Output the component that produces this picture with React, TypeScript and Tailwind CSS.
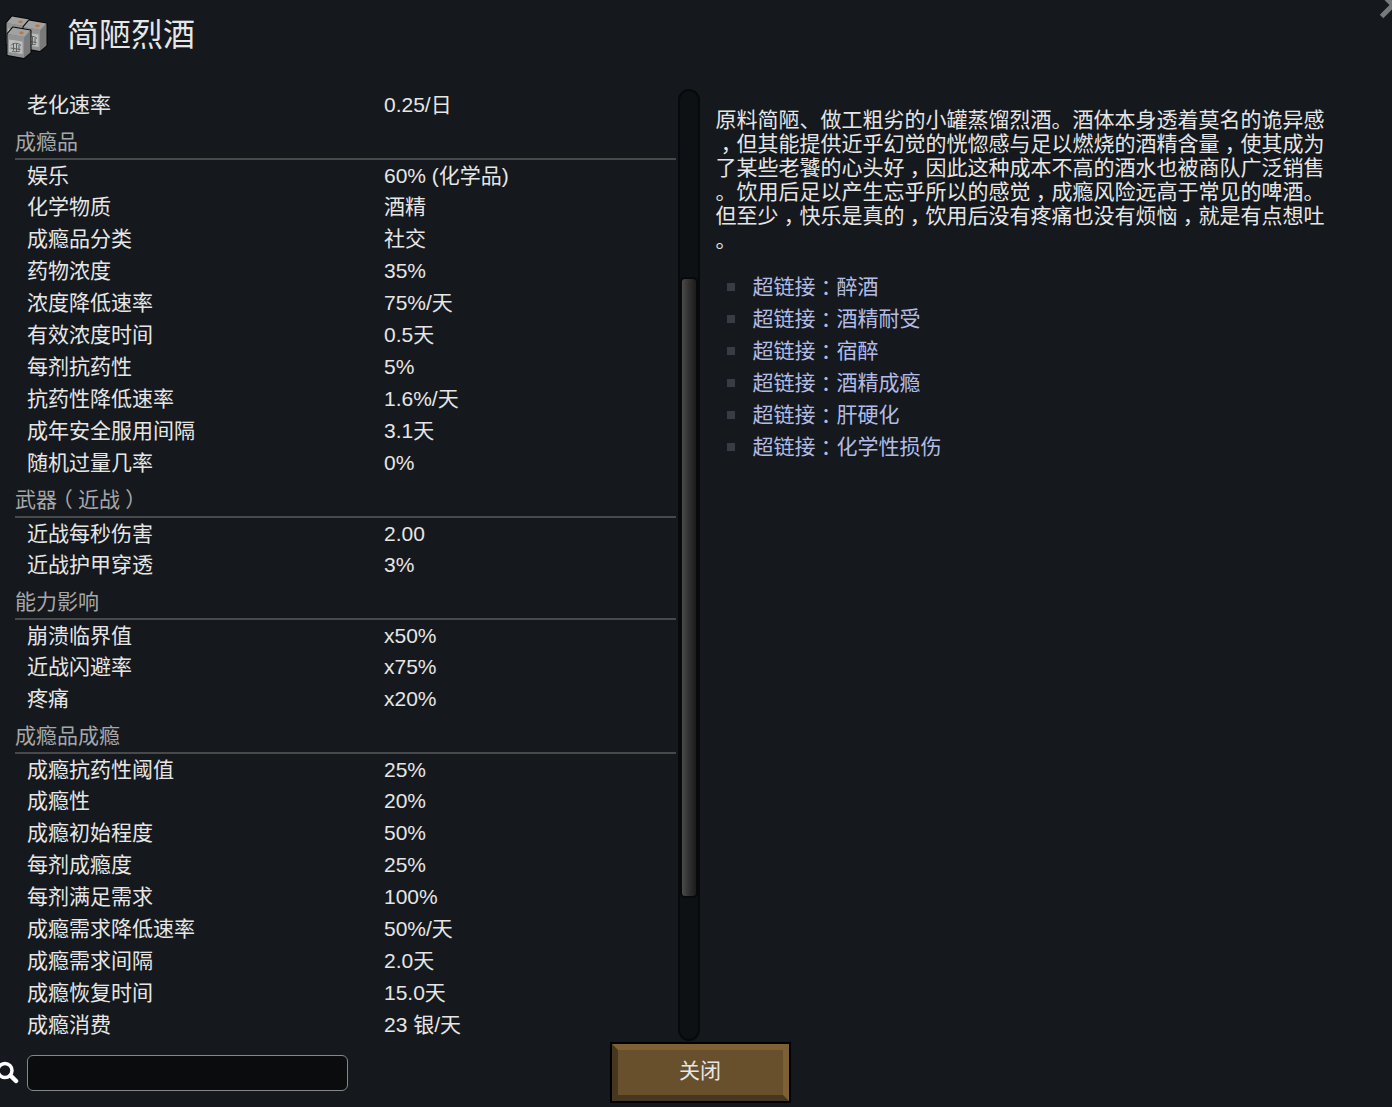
import React from "react";

type Group = { title?: string; rows: [string, string][] };

const groups: Group[] = [
  { rows: [["老化速率", "0.25/日"]] },
  {
    title: "成瘾品",
    rows: [
      ["娱乐", "60% (化学品)"],
      ["化学物质", "酒精"],
      ["成瘾品分类", "社交"],
      ["药物浓度", "35%"],
      ["浓度降低速率", "75%/天"],
      ["有效浓度时间", "0.5天"],
      ["每剂抗药性", "5%"],
      ["抗药性降低速率", "1.6%/天"],
      ["成年安全服用间隔", "3.1天"],
      ["随机过量几率", "0%"],
    ],
  },
  {
    title: "武器（近战）",
    rows: [
      ["近战每秒伤害", "2.00"],
      ["近战护甲穿透", "3%"],
    ],
  },
  {
    title: "能力影响",
    rows: [
      ["崩溃临界值", "x50%"],
      ["近战闪避率", "x75%"],
      ["疼痛", "x20%"],
    ],
  },
  {
    title: "成瘾品成瘾",
    rows: [
      ["成瘾抗药性阈值", "25%"],
      ["成瘾性", "20%"],
      ["成瘾初始程度", "50%"],
      ["每剂成瘾度", "25%"],
      ["每剂满足需求", "100%"],
      ["成瘾需求降低速率", "50%/天"],
      ["成瘾需求间隔", "2.0天"],
      ["成瘾恢复时间", "15.0天"],
      ["成瘾消费", "23 银/天"],
    ],
  },
];

const description =
  "原料简陋、做工粗劣的小罐蒸馏烈酒。酒体本身透着莫名的诡异感，但其能提供近乎幻觉的恍惚感与足以燃烧的酒精含量，使其成为了某些老饕的心头好，因此这种成本不高的酒水也被商队广泛销售。饮用后足以产生忘乎所以的感觉，成瘾风险远高于常见的啤酒。但至少，快乐是真的，饮用后没有疼痛也没有烦恼，就是有点想吐。";

const links = ["醉酒", "酒精耐受", "宿醉", "酒精成瘾", "肝硬化", "化学性损伤"];

/* Commas, colons and brackets sit in the middle of a full-width cell. */
function Text({ children }: { children: string }) {
  return (
    <>
      {children.split(/([，：（）])/).map((part, i) =>
        i % 2 ? (
          <span
            key={i}
            className="inline-block w-[1em] text-center [font-feature-settings:'halt']"
          >
            {part}
          </span>
        ) : (
          part
        ),
      )}
    </>
  );
}

function Jug({ x, y }: { x: number; y: number }) {
  return (
    <g transform={`translate(${x} ${y})`}>
      <path d="M.5 7 6 .5l17.500 3v22L17 31 .5 28Z" fill="#777" stroke="#050607" strokeWidth="2" strokeLinejoin="round" />
      <path d="M.5 7 6 .5l17.500 3L17.500 10Z" fill="#a2a2a2" />
      <path d="M.5 7l17 3L17 31 .5 28Z" fill="#939393" />
      <path d="M17.500 10l6-6.500v22L17 31Z" fill="#7a7a7b" />
      <ellipse cx="14.500" cy="5.800" rx="2.200" ry="1.400" fill="#b9783c" />
      <path d="M2 12.500l13.500 2V27L2 25Z" fill="#bcbebe" />
      <path
        d="M4 18.500c2-3 7-3 10 0M3.500 21l10 1.500M5 24c2 1 5 1 8 0M6.500 16.500v7M9.500 17v8M12 18v5"
        stroke="#5c6061"
        strokeWidth="1"
        fill="none"
      />
    </g>
  );
}

export default function App() {
  return (
    <main
      lang="zh-CN"
      className="relative min-h-screen overflow-hidden bg-[#15191d] font-['Liberation_Sans','Noto_Sans_CJK_SC',sans-serif] text-[21px] leading-6 text-[#e6e6e6] [text-spacing-trim:space-all]"
    >
      <header className="flex h-[89px] items-start gap-[17px] pt-3.5 pl-1">
        <svg className="h-[46px] w-[46px] shrink-0" viewBox="0 0 46 46" aria-hidden="true">
          <Jug x={2} y={2} />
          <Jug x={19} y={6} />
          <Jug x={3} y={13} />
        </svg>
        <h1 className="text-[32px] leading-[42px]">简陋烈酒</h1>
      </header>
      <button aria-label="关闭窗口" className="absolute top-0 right-0 h-[19px] w-3 overflow-hidden">
        <svg className="h-[19px] w-3" viewBox="0 0 12 19" aria-hidden="true">
          <path d="M1.500 16.500 14 4M6 -2l7 7" stroke="#77797b" strokeWidth="5" fill="none" />
        </svg>
      </button>

      <div className="grid grid-cols-[minmax(0,661fr)_22px_minmax(0,693fr)] pl-[15px]">
        <table className="w-full table-fixed border-collapse text-left">
          <colgroup>
            <col className="w-[369px]" />
            <col />
          </colgroup>
          {groups.map((g, i) => (
            <tbody key={i}>
              {g.title && (
                <tr className="h-[38px] border-b-2 border-[#47494b] text-[#a6a7a8]">
                  <th colSpan={2} scope="rowgroup" className="px-0 pt-1 pb-0 font-normal">
                    <Text>{g.title}</Text>
                  </th>
                </tr>
              )}
              {g.rows.map(([k, v]) => (
                <tr key={k} className="h-8">
                  <th scope="row" className="py-0 pr-0 pl-3 font-normal">
                    {k}
                  </th>
                  <td className="p-0">{v}</td>
                </tr>
              ))}
            </tbody>
          ))}
        </table>

        <div className="ml-0.5 -mr-0.5 grid grid-rows-[187fr_623fr_141fr] rounded-full border-2 border-[#08090b] bg-[#0d1113]">
          <div className="row-start-2 rounded-[5px] border-2 border-[#08090b] bg-linear-to-r from-[#4b4b4b] via-[#303030] to-[#1c1c1c]" />
        </div>

        <section className="pt-[19px] pr-[62px] pl-[17px]">
          <p className="[line-break:anywhere]">
            <Text>{description}</Text>
          </p>
          <ul className="mt-[19px]">
            {links.map((l) => (
              <li key={l} className="flex h-8 items-center gap-[17px] pl-3">
                <span className="size-2 shrink-0 bg-[#3a3b44]" />
                <a href="#" className="text-[#b3bce6]">
                  <Text>{"超链接：" + l}</Text>
                </a>
              </li>
            ))}
          </ul>
        </section>
      </div>

      <footer className="grid grid-cols-[1fr_181px_1fr] items-center pt-px pl-2">
        <label className="-ml-3 flex items-center gap-2">
          <svg className="h-6 w-[23px] shrink-0" viewBox="0 0 23 24" aria-hidden="true">
            <circle cx="9" cy="9.500" r="7" stroke="#fff" strokeWidth="3.500" fill="none" />
            <path d="M14.500 14.500l5.500 5.500" stroke="#fff" strokeWidth="4.500" strokeLinecap="round" />
          </svg>
          <input
            type="text"
            aria-label="搜索"
            className="h-9 w-[321px] rounded-md border border-[#85878a] bg-[#0b0c0e] px-2 outline-none"
          />
        </label>
        <button className="border-2 border-black">
          <span className="block border-6 border-t-[#7d6033] border-r-[#7d6033] border-b-[#483720] border-l-[#483720] bg-[#69502d] pt-[9px] pb-3">
            关闭
          </span>
        </button>
      </footer>
    </main>
  );
}
